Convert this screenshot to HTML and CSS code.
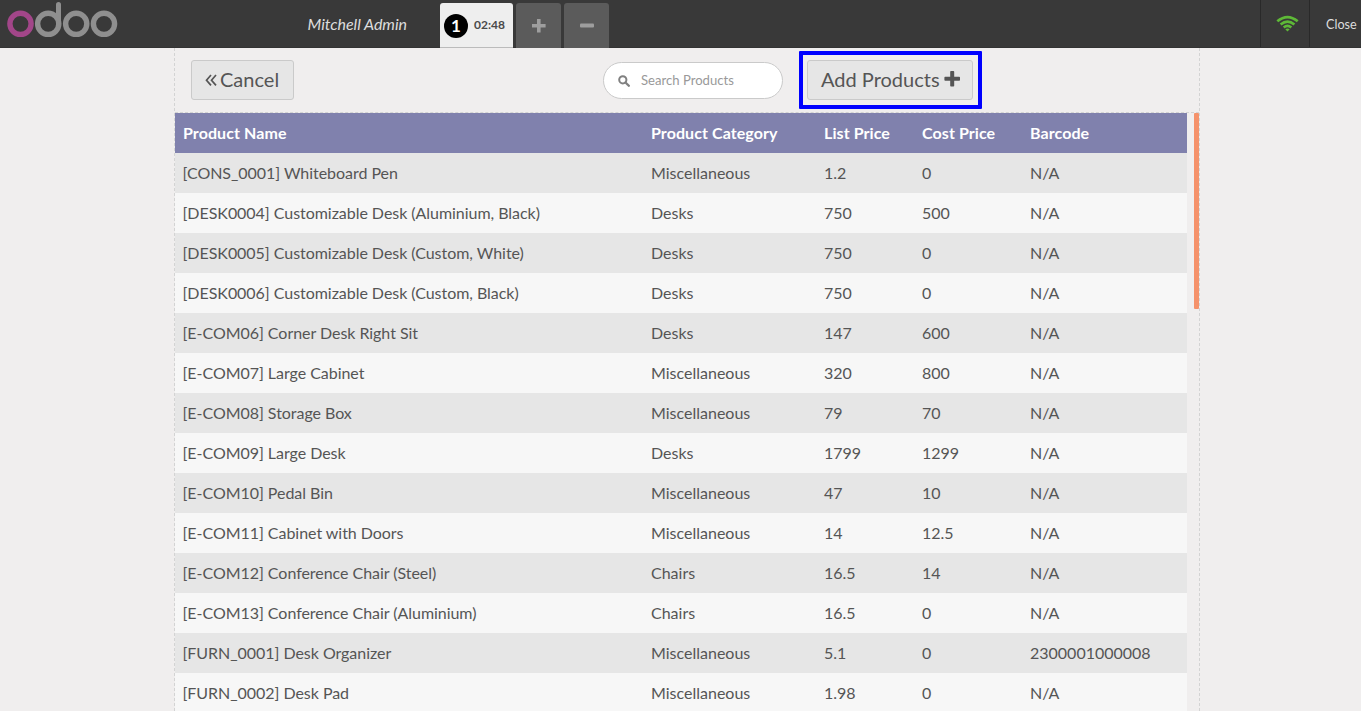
FILE: index.html
```html
<!DOCTYPE html>
<html lang="en">
<head>
<meta charset="utf-8">
<title>Odoo POS - Products</title>
<link rel="stylesheet" href="styles.css">
</head>
<body>
<header class="topbar">
  <div class="brand">
    <svg class="logo" width="120" height="42" viewBox="0 0 120 42" fill="none" stroke="#8f8f8f" stroke-width="5.4" role="img" aria-label="odoo">
      <circle cx="20.5" cy="23.8" r="10.6" stroke="#a24689"/>
      <circle cx="48.2" cy="23.8" r="10.6"/>
      <path d="M58.5 24V4.5" stroke-width="5" stroke-linecap="round"/>
      <circle cx="76.2" cy="23.8" r="10.6"/>
      <circle cx="104" cy="23.8" r="10.6"/>
    </svg>
    <span class="username">Mitchell Admin</span>
  </div>
  <nav class="orders">
    <div class="order active"><span class="number">1</span><span class="time">02:48</span></div>
    <button class="order" aria-label="New order"><svg width="16" height="16" viewBox="0 0 16 16"><path fill="#9e9e9e" d="M6 1h3.600v5h5v3.600h-5v5H6v-5H1V6h5z"/></svg></button>
    <button class="order" aria-label="Delete order"><svg width="16" height="16" viewBox="0 0 16 16"><rect x="1" y="5.500" width="14" height="4" rx="1" fill="#9e9e9e"/></svg></button>
  </nav>
  <div class="status">
    <div class="wifi">
      <svg width="24" height="18" viewBox="0 0 24 18" fill="none" stroke="#5eb937" stroke-width="2.7">
        <path d="M1.300 6.300Q11.500 -2.100 21.700 6.300"/>
        <path d="M4.600 9.500Q11.500 3.700 18.400 9.500"/>
        <path d="M7.700 12.500Q11.500 9.300 15.300 12.500"/>
        <path d="M9.300 14.300Q11.500 12.700 13.700 14.300L11.500 16.600z" fill="#5eb937" stroke="none"/>
      </svg>
    </div>
    <div class="close">Close</div>
  </div>
</header>
<main class="screen">
  <div class="toolbar">
    <button class="button cancel"><svg width="12" height="14" viewBox="0 0 12 14" fill="none" stroke="#555" stroke-width="1.700"><path d="M6 2 1.500 7.200l4.500 5.200M11 2 6.500 7.200l4.500 5.200"/></svg>Cancel</button>
    <label class="search">
      <svg width="12" height="12" viewBox="0 0 12 12" fill="none" stroke="#808080" stroke-width="2"><circle cx="4.800" cy="4.800" r="3.600"/><path d="m7.500 7.500 3.300 3.300" stroke-width="2.300" stroke-linecap="round"/></svg>
      <input type="text" placeholder="Search Products">
    </label>
    <div class="add-wrap">
      <button class="button add">Add Products<svg width="16" height="16" viewBox="0 0 16 16"><path fill="#555" d="M7 0h2.400q.8 0 .8.8v5h5q.8 0 .8.8V9q0 .8-.8.8h-5v5q0 .8-.8.8H7q-.8 0-.8-.8v-5h-5Q.4 9.800.4 9V6.600q0-.8.8-.8h5v-5Q6.200 0 7 0z"/></svg></button>
      <span class="highlight"></span>
    </div>
  </div>
  <div class="list">
    <table class="products">
      <colgroup><col class="c-name"><col class="c-category"><col class="c-price"><col class="c-cost"><col></colgroup>
      <thead><tr><th>Product Name</th><th>Product Category</th><th>List Price</th><th>Cost Price</th><th>Barcode</th></tr></thead>
      <tbody>
        <tr><td>[CONS_0001] Whiteboard Pen</td><td>Miscellaneous</td><td>1.2</td><td>0</td><td>N/A</td></tr>
        <tr><td>[DESK0004] Customizable Desk (Aluminium, Black)</td><td>Desks</td><td>750</td><td>500</td><td>N/A</td></tr>
        <tr><td>[DESK0005] Customizable Desk (Custom, White)</td><td>Desks</td><td>750</td><td>0</td><td>N/A</td></tr>
        <tr><td>[DESK0006] Customizable Desk (Custom, Black)</td><td>Desks</td><td>750</td><td>0</td><td>N/A</td></tr>
        <tr><td>[E-COM06] Corner Desk Right Sit</td><td>Desks</td><td>147</td><td>600</td><td>N/A</td></tr>
        <tr><td>[E-COM07] Large Cabinet</td><td>Miscellaneous</td><td>320</td><td>800</td><td>N/A</td></tr>
        <tr><td>[E-COM08] Storage Box</td><td>Miscellaneous</td><td>79</td><td>70</td><td>N/A</td></tr>
        <tr><td>[E-COM09] Large Desk</td><td>Desks</td><td>1799</td><td>1299</td><td>N/A</td></tr>
        <tr><td>[E-COM10] Pedal Bin</td><td>Miscellaneous</td><td>47</td><td>10</td><td>N/A</td></tr>
        <tr><td>[E-COM11] Cabinet with Doors</td><td>Miscellaneous</td><td>14</td><td>12.5</td><td>N/A</td></tr>
        <tr><td>[E-COM12] Conference Chair (Steel)</td><td>Chairs</td><td>16.5</td><td>14</td><td>N/A</td></tr>
        <tr><td>[E-COM13] Conference Chair (Aluminium)</td><td>Chairs</td><td>16.5</td><td>0</td><td>N/A</td></tr>
        <tr><td>[FURN_0001] Desk Organizer</td><td>Miscellaneous</td><td>5.1</td><td>0</td><td>2300001000008</td></tr>
        <tr><td>[FURN_0002] Desk Pad</td><td>Miscellaneous</td><td>1.98</td><td>0</td><td>N/A</td></tr>
      </tbody>
    </table>
    <div class="scroll-thumb"></div>
  </div>
</main>
</body>
</html>
```
FILE: styles.css
```css
* { box-sizing: border-box; }
body {
  margin: 0;
  height: 100vh;
  display: flex;
  flex-direction: column;
  overflow: hidden;
  background: #f0eeee;
  color: #555;
  font-family: Lato, sans-serif;
  font-size: 16px;
}
button { font-family: inherit; color: inherit; }
svg { flex: none; display: block; }
.topbar {
  flex: none;
  height: 48px;
  display: flex;
  background: #393939;
  border-bottom: 1px solid #333;
}
.brand {
  width: 440px;
  display: flex;
  justify-content: space-between;
  padding-right: 33px;
}
.username {
  line-height: 48px;
  font-style: italic;
  letter-spacing: -0.03px;
  color: #ddd;
}
.orders { display: flex; gap: 3px; padding-top: 3px; height: 48px; }
.order {
  width: 45px;
  height: 45px;
  display: flex;
  align-items: center;
  justify-content: center;
  padding: 0;
  border: 0;
  border-radius: 3px 3px 0 0;
  background: #5b5b5b;
}
.order.active {
  width: 73px;
  justify-content: flex-start;
  gap: 6px;
  padding-left: 4px;
  background: #eee;
  border-bottom: 1px solid #bbb;
}
.number {
  width: 24px;
  height: 24px;
  margin-top: 2px;
  border-radius: 50%;
  background: #000;
  color: #fff;
  font-weight: 700;
  font-size: 17px;
  line-height: 24px;
  text-align: center;
}
.time { font-size: 12px; font-weight: 700; color: #4a4a4a; padding-bottom: 1px; }
.status { display: flex; margin-left: auto; }
.wifi {
  width: 50px;
  border: solid #292929;
  border-width: 0 1px;
  padding: 15px 0 0 15px;
}
.close { width: 51px; padding-left: 16px; font-size: 12.6px; line-height: 49px; color: #ddd; }
.screen {
  width: 1026px;
  flex: 1;
  min-height: 0;
  margin-left: 174px;
  display: flex;
  flex-direction: column;
  border: dashed #d3d3d3;
  border-width: 0 1px;
}
.toolbar {
  flex: none;
  height: 65px;
  display: flex;
  align-items: flex-start;
  padding: 12px 0 0 16px;
  border-bottom: 1px dashed #d3d3d3;
}
.button {
  height: 40px;
  display: flex;
  align-items: center;
  padding: 0 13px 2px;
  border: 1px solid #cacaca;
  border-radius: 3px;
  background: #e6e6e6;
  font-size: 20px;
  line-height: 36px;
  white-space: nowrap;
}
.cancel { width: 103px; gap: 3px; }
.cancel svg { margin-top: 2px; }
.add { width: 166px; gap: 4px; }
.search {
  width: 180px;
  height: 37px;
  margin: 2px 24px 0 309px;
  padding: 0 14px;
  display: flex;
  align-items: center;
  gap: 11px;
  border: 1px solid #cacaca;
  border-radius: 19px;
  background: #fff;
}
.search input {
  width: 120px;
  padding: 0 0 2px;
  border: 0;
  outline: 0;
  background: none;
  font: 13.1px Lato, sans-serif;
}
.search input::placeholder { color: #999; }
.add-wrap { position: relative; }
.highlight {
  position: absolute;
  inset: -9px -9px -9px -8px;
  border: 4px solid #00f;
  border-radius: 1px;
}
.list { display: flex; justify-content: space-between; flex: 1; min-height: 0; overflow: hidden; }
.products { width: 1012px; height: 600px; table-layout: fixed; border-collapse: collapse; }
.c-name { width: 468px; }
.c-category { width: 173px; }
.c-price { width: 98px; }
.c-cost { width: 108px; }
.products tr { height: 40px; }
.products th, .products td { padding: 0 8px 2px; text-align: left; white-space: nowrap; }
.products td:first-child { padding-left: 7.5px; letter-spacing: -0.04px; }
.products th { background: #8081ad; color: #fff; font-weight: 700; letter-spacing: 0.08px; }
.products tbody tr { background: #f7f7f7; }
.products tbody tr:nth-child(odd) { background: #e6e6e6; }
.scroll-thumb { width: 5px; height: 196px; background: #f5926b; border-radius: 1px; }
```
